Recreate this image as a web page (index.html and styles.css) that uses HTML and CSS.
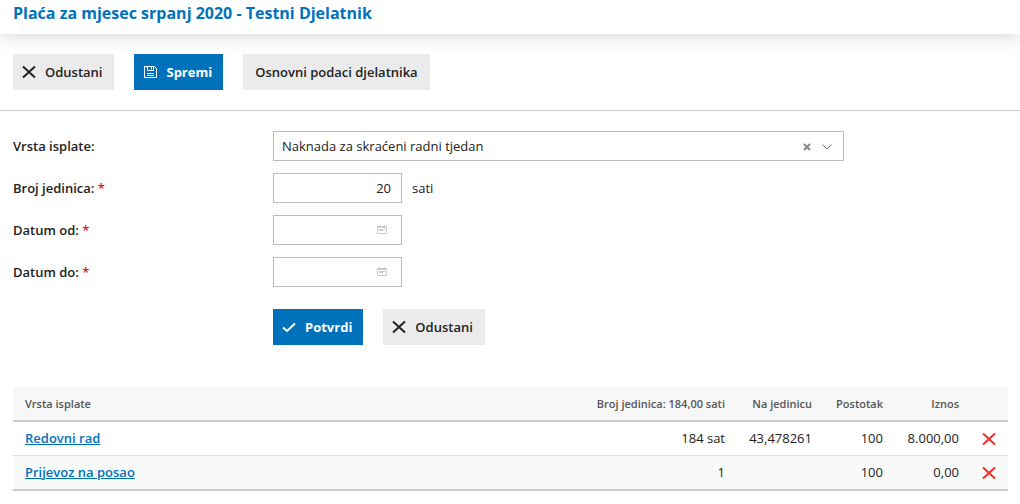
FILE: index.html
```html
<!DOCTYPE html>
<html lang="hr">
<head>
  <meta charset="UTF-8">
  <meta name="viewport" content="width=device-width, initial-scale=1.0">
  <title>Plaća za mjesec srpanj 2020</title>
  <link rel="stylesheet" href="styles.css">
</head>
<body>
  <header class="naslov">
    <h1>Plaća za mjesec srpanj 2020 - Testni Djelatnik</h1>
  </header>

  <div class="alatna-traka">
    <button type="button" class="gumb">
      <svg class="ikona" viewBox="0 0 14 14"><path d="M1 1.5L13 12.5M13 1.5L1 12.5"/></svg>
      Odustani
    </button>
    <button type="button" class="gumb glavni">
      <svg class="ikona tanka" viewBox="0 0 14 14"><path d="M1.5 1.5H11.5L13.5 3.5V12.5H1.5ZM4.5 1.5V5.5H10.5V1.5M8.5 2V4.5M4 8.5H11M4 10.5H11"/></svg>
      Spremi
    </button>
    <button type="button" class="gumb siroki">Osnovni podaci djelatnika</button>
  </div>

  <main>
    <form class="obrazac">
      <div class="red">
        <label for="vrsta">Vrsta isplate:</label>
        <div class="izbornik">
          <select id="vrsta" name="vrsta">
            <option>Naknada za skraćeni radni tjedan</option>
          </select>
          <button type="button" class="ocisti" aria-label="Očisti">
            <svg viewBox="0 0 8 8"><path d="M1 1L7 7M7 1L1 7"/></svg>
          </button>
          <svg class="strelica" viewBox="0 0 10 6"><path d="M0.5 0.5L5 5L9.5 0.5"/></svg>
        </div>
      </div>
      <div class="red">
        <label for="jedinice">Broj jedinica: <span class="obavezno">*</span></label>
        <div class="polje">
          <input type="text" id="jedinice" name="jedinice" value="20">
          <span>sati</span>
        </div>
      </div>
      <div class="red">
        <label for="datum-od">Datum od: <span class="obavezno">*</span></label>
        <div class="polje datum">
          <input type="text" id="datum-od" name="datum-od">
          <svg class="kalendar" viewBox="0 0 12 10"><path d="M1.5 1.5H10.5V8.5H1.5ZM1 2.5H11M3.5 0V2M8.5 0V2M3 4.5H9M3 5.5H7"/></svg>
        </div>
      </div>
      <div class="red">
        <label for="datum-do">Datum do: <span class="obavezno">*</span></label>
        <div class="polje datum">
          <input type="text" id="datum-do" name="datum-do">
          <svg class="kalendar" viewBox="0 0 12 10"><path d="M1.5 1.5H10.5V8.5H1.5ZM1 2.5H11M3.5 0V2M8.5 0V2M3 4.5H9M3 5.5H7"/></svg>
        </div>
      </div>
      <div class="akcije">
        <button type="button" class="gumb glavni">
          <svg class="ikona kvacica" viewBox="0 0 14 14"><path d="M1 7.5L5 11L13 3.5"/></svg>
          Potvrdi
        </button>
        <button type="button" class="gumb">
          <svg class="ikona" viewBox="0 0 14 14"><path d="M1 1.5L13 12.5M13 1.5L1 12.5"/></svg>
          Odustani
        </button>
      </div>
    </form>

    <table class="isplate">
      <thead>
        <tr>
          <th>Vrsta isplate</th>
          <th class="jedinice">Broj jedinica: 184,00 sati</th>
          <th class="cijena">Na jedinicu</th>
          <th class="postotak">Postotak</th>
          <th class="iznos">Iznos</th>
          <th class="brisanje"></th>
        </tr>
      </thead>
      <tbody>
        <tr>
          <td><a href="#">Redovni rad</a></td>
          <td>184 sat</td>
          <td>43,478261</td>
          <td>100</td>
          <td>8.000,00</td>
          <td><button type="button" class="obrisi" aria-label="Obriši"><svg viewBox="0 0 14 14"><path d="M1 1.5L13 12.5M13 1.5L1 12.5"/></svg></button></td>
        </tr>
        <tr>
          <td><a href="#">Prijevoz na posao</a></td>
          <td>1</td>
          <td></td>
          <td>100</td>
          <td>0,00</td>
          <td><button type="button" class="obrisi" aria-label="Obriši"><svg viewBox="0 0 14 14"><path d="M1 1.5L13 12.5M13 1.5L1 12.5"/></svg></button></td>
        </tr>
      </tbody>
    </table>
  </main>
</body>
</html>
```
FILE: styles.css
```css
* {
  box-sizing: border-box;
}

body {
  margin: 0;
  background-color: #fff;
  color: #222;
  font-family: "Open Sans", sans-serif;
  font-size: 13px;
  line-height: 18px;
}

button, input, select {
  font: inherit;
  color: inherit;
}

svg {
  display: block;
  fill: none;
  stroke: currentColor;
}

/* Naslov */
.naslov {
  padding: 2px 13px 10px;
  box-shadow: 0 0 20px rgba(0, 0, 0, 0.2);
}

.naslov h1 {
  margin: 0;
  font-size: 16px;
  line-height: 22px;
  font-weight: 700;
  color: #0072bc;
}

/* Gumbi */
.alatna-traka {
  display: flex;
  flex-wrap: wrap;
  gap: 20px;
  padding: 20px 13px;
  border-bottom: 1px solid #ccc;
}

.gumb {
  display: flex;
  align-items: center;
  gap: 9px;
  height: 36px;
  padding: 0 12px 0 9px;
  border: 0;
  background-color: #ebebeb;
  font-weight: 600;
  cursor: pointer;
}

.gumb.glavni {
  padding-right: 11px;
  background-color: #0072bc;
  color: #fff;
  font-weight: 700;
}

.gumb.siroki {
  padding: 0 12px;
}

.ikona {
  width: 14px;
  height: 14px;
  stroke-width: 2;
}

.ikona.tanka {
  stroke-width: 1;
}

.ikona.kvacica {
  stroke-width: 2;
}

/* Obrazac */
main {
  padding: 20px 12px 12px 13px;
}

.obrazac {
  display: flex;
  flex-direction: column;
  gap: 12px;
}

.red {
  display: grid;
  grid-template-columns: 260px minmax(0, 571px);
  align-items: center;
}

.red label {
  font-weight: 600;
}

.obavezno {
  color: #e02020;
}

.izbornik {
  position: relative;
}

.izbornik select,
.polje input {
  display: block;
  height: 30px;
  border: 1px solid #bbb;
  border-radius: 0;
  background-color: #fff;
}

.izbornik select {
  width: 100%;
  padding: 0 48px 0 8px;
  appearance: none;
}

.ocisti {
  position: absolute;
  top: 12px;
  right: 33px;
  width: 8px;
  height: 8px;
  padding: 0;
  border: 0;
  background: none;
  color: #888;
  stroke-width: 2;
}

.strelica {
  position: absolute;
  top: 13px;
  right: 12px;
  width: 10px;
  height: 6px;
  color: #777;
  pointer-events: none;
}

.polje {
  position: relative;
  display: flex;
  align-items: center;
  gap: 10px;
}

.polje input {
  width: 129px;
  padding: 0 10px;
  text-align: right;
}

.datum {
  width: 129px;
}

.datum input {
  padding-right: 28px;
}

.kalendar {
  position: absolute;
  top: 10px;
  right: 14px;
  width: 12px;
  height: 10px;
  color: #ccc;
}

.akcije {
  display: flex;
  gap: 20px;
  padding: 10px 0 0 260px;
}

/* Tablica isplata */
.isplate {
  width: 100%;
  margin-top: 42px;
  border-collapse: separate;
  border-spacing: 0;
  table-layout: fixed;
}

.isplate th,
.isplate td {
  height: 34px;
  padding: 0 12px;
  text-align: right;
}

.isplate th {
  height: 35px;
  border-bottom: 2px solid #ccc;
  background-color: #f7f7f7;
  color: #555;
  font-size: 11px;
  font-weight: 600;
  white-space: nowrap;
}

.isplate td {
  padding-bottom: 2px;
  border-bottom: 1px solid #ddd;
}

.isplate tbody tr:last-child td {
  height: 35px;
  border-bottom: 2px solid #ccc;
  background-color: #f8faf9;
}

.isplate th:first-child,
.isplate td:first-child {
  text-align: left;
}

.isplate td:last-child {
  padding: 0 12px 0 11px;
}

.isplate a {
  color: #0072bc;
  font-weight: 600;
}

.jedinice {
  width: 160px;
}

.cijena {
  width: 87px;
}

.postotak {
  width: 71px;
}

.iznos {
  width: 76px;
}

.brisanje {
  width: 37px;
}

.obrisi {
  display: block;
  width: 14px;
  height: 14px;
  padding: 0;
  border: 0;
  background: none;
  color: #ee3124;
  stroke-width: 2;
  cursor: pointer;
}
```
